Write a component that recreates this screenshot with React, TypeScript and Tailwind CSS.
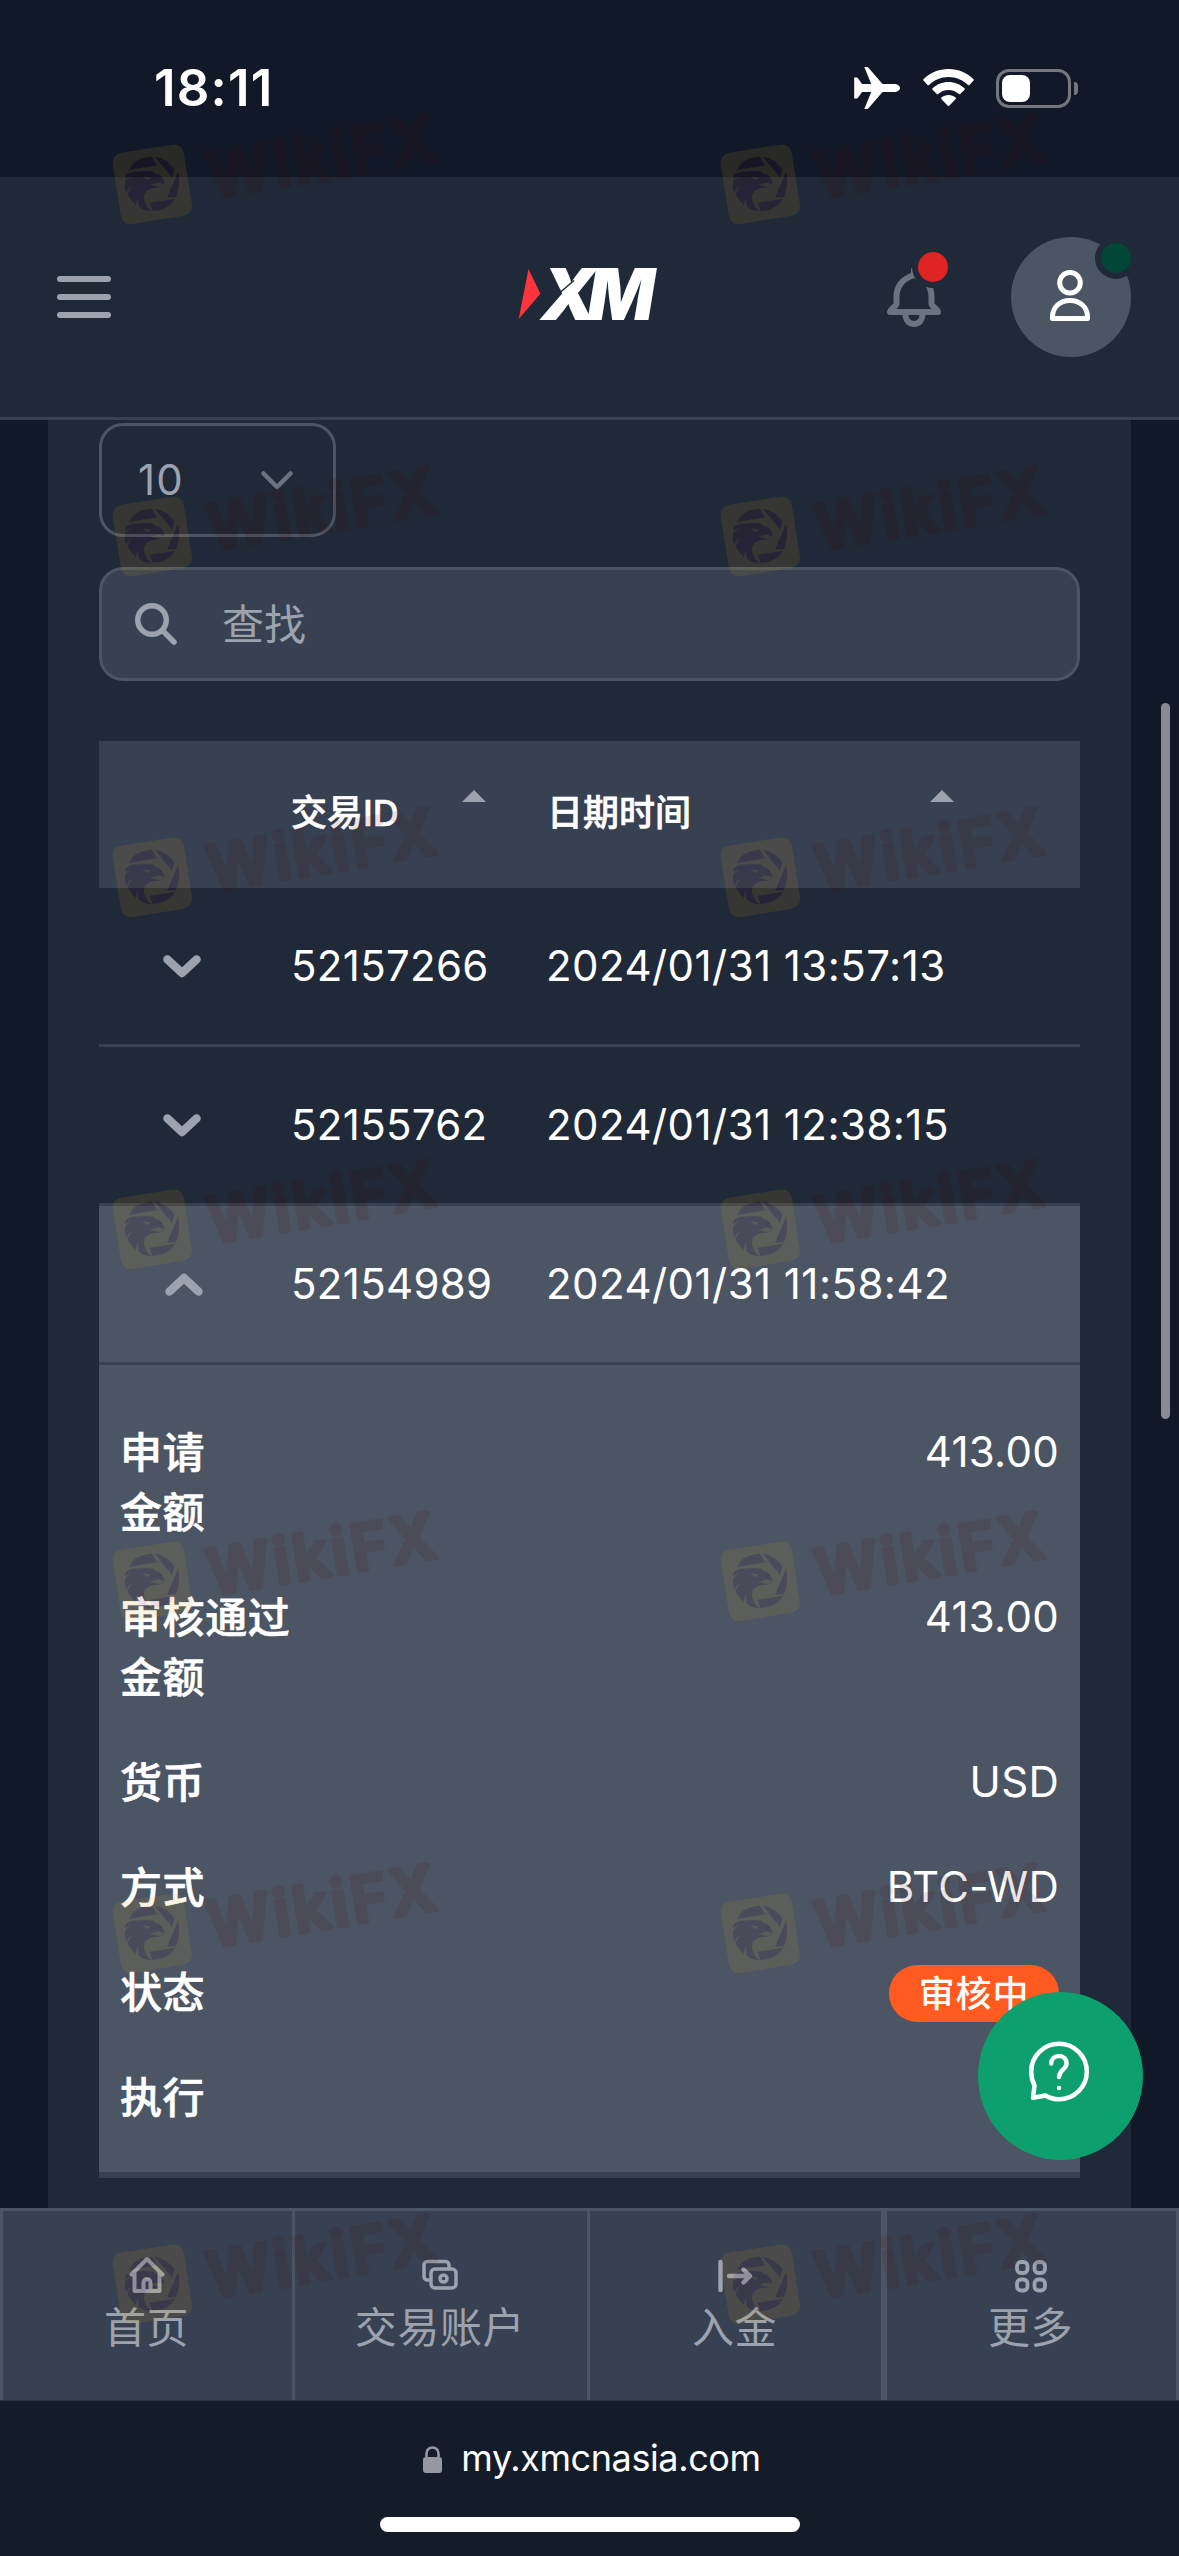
import React from "react";

const transactions = [
  { id: "52157266", date: "2024/01/31 13:57:13" },
  { id: "52155762", date: "2024/01/31 12:38:15" },
  { id: "52154989", date: "2024/01/31 11:58:42", open: true },
];

const watermarkRows = [144, 496, 837, 1189, 1541, 1893, 2244];

const StatusBar = () => (
  <div className="flex h-[177px] items-start justify-between pt-[58px] pr-[101px] pl-[154px]">
    <p className="text-[51px] leading-[60px] font-semibold tracking-[1.2px] text-white">18:11</p>
    <div className="flex h-[60px] items-center">
      <svg width="46" height="42" viewBox="0 0 46 42" fill="#fff">
        <path d="M40 17H28.5L14.5 .8C14 .3 13.5 0 12.8 0H10.3L17.2 17H8L4.2 11.6C3.8 11 3.2 10.6 2.5 10.6H.2V31.4H2.5C3.2 31.4 3.8 31 4.2 30.4L8 25H17.2L10.3 42H12.8C13.5 42 14 41.7 14.5 41.2L28.5 25H40C43.5 25 46 23 46 21S43.5 17 40 17Z" />
      </svg>
      <svg className="ml-[23px]" width="51" height="38" viewBox="0 0 51 38" fill="#fff">
        <path d="M25.500 0C15.600 0 6.600 3.900 .4 10.200C0 10.600 0 11.200 .4 11.600L4.600 15.900C5 16.300 5.600 16.300 6 15.900C11 10.900 17.900 7.900 25.500 7.900S40 10.900 45 15.900C45.400 16.300 46 16.300 46.400 15.900L50.600 11.600C51 11.200 51 10.600 50.600 10.200C44.400 3.900 35.400 0 25.500 0Z" />
        <path d="M25.500 13C19.300 13 13.700 15.400 9.500 19.300C9.100 19.700 9.100 20.300 9.500 20.700L13.800 25.100C14.200 25.500 14.700 25.500 15.100 25.100C17.900 22.600 21.500 21 25.500 21S33.100 22.600 35.900 25.100C36.300 25.500 36.800 25.500 37.200 25.100L41.500 20.700C41.900 20.300 41.900 19.700 41.500 19.300C37.300 15.400 31.700 13 25.500 13Z" />
        <path d="M25.500 26C22.800 26 20.300 27 18.400 28.600C18 29 18 29.500 18.300 29.900L24.800 36.700C25.200 37.100 25.800 37.100 26.200 36.700L32.700 29.900C33 29.500 33 29 32.600 28.600C30.700 27 28.200 26 25.500 26Z" />
      </svg>
      <div className="ml-[22px] h-[39px] w-[75px] rounded-[13px] border-3 border-[#75777f] p-[3px]">
        <div className="h-[27px] w-[28px] rounded-[8px] bg-white" />
      </div>
      <div className="ml-[3px] h-[13px] w-[4px] rounded-r-full bg-[#75777f]" />
    </div>
  </div>
);

const Logo = () => (
  <svg className="overflow-visible" width="142" height="90" viewBox="0 -19 142 90">
    <polygon points="12.500,0 24.400,24.700 2.600,50.300" fill="#ff343d" />
    <text
      x="25"
      y="50.500"
      fontSize="71"
      fontWeight="900"
      fontStyle="italic"
      letterSpacing="-9"
      textLength="105"
      lengthAdjust="spacingAndGlyphs"
      fill="#fff"
      className="font-['Inter']"
    >
      XM
    </text>
    <path d="M44 23.500L58 11.500" stroke="#1f2937" strokeWidth="1.500" />
  </svg>
);

const Header = () => (
  <div className="flex h-[243px] items-center justify-between border-b-3 border-[#374151] bg-[#1f2937] pr-12 pl-[57px]">
    <div className="flex w-[244px] flex-col gap-3">
      <div className="h-1.5 w-[54px] rounded-full bg-[#9ca3af]" />
      <div className="h-1.5 w-[54px] rounded-full bg-[#9ca3af]" />
      <div className="h-1.5 w-[54px] rounded-full bg-[#9ca3af]" />
    </div>
    <div className="ml-[215px] h-[94px]">
      <Logo />
    </div>
    <div className="ml-auto flex items-center gap-[63px]">
      <svg width="62" height="90" viewBox="886 252 62 90" fill="none">
        <g stroke="#6b7280" strokeWidth="6" strokeLinecap="round" strokeLinejoin="round">
          <path d="M914 270V275C902 279 896.500 287 896.500 297V304C896.500 306 890 309.500 890 312H938C938 309.500 931.500 306 931.500 304V297C931.500 287 926 279 914 275" />
          <path d="M905.500 314C905.500 320 909 324 914 324S922.500 320 922.500 314" />
        </g>
        <circle cx="933" cy="267" r="21" fill="#1f2937" />
        <circle cx="933" cy="267" r="15" fill="#e02424" />
      </svg>
      <div className="relative flex h-[120px] w-[120px] rounded-full bg-[#4b5563]">
        <svg width="120" height="120" viewBox="1011 237 120 120" fill="none" stroke="#fff" strokeWidth="5" strokeLinejoin="round">
          <circle cx="1070" cy="282.700" r="10.300" />
          <path d="M1052.500 318.500V317C1052.500 307 1060 300.500 1070 300.500S1087.500 307 1087.500 317V318.500Z" />
        </svg>
        <div className="absolute top-0 -right-1.5 h-[42px] w-[42px] rounded-full border-6 border-[#1f2937] bg-[#014737]" />
      </div>
    </div>
  </div>
);

const Chevron = ({ up = false }) => (
  <svg
    className={up ? "ml-[66px] rotate-180" : "ml-[64px]"}
    width="38"
    height="23"
    viewBox="0 0 38 23"
    fill="none"
    stroke="#9ca3af"
    strokeWidth="8.500"
    strokeLinecap="round"
    strokeLinejoin="round"
  >
    <path d="M4.500 4.500L19 18L33.500 4.500" />
  </svg>
);

const SortArrow = () => (
  <svg className="-mt-[34px]" width="24" height="12" viewBox="0 0 24 12">
    <polygon points="12,0 24,12 0,12" fill="#9ca3af" />
  </svg>
);

const Table = () => (
  <div className="mt-[60px]">
    <div className="grid h-[147px] grid-cols-[192px_256px_1fr] items-center bg-[#374151] pb-1 text-[36px] font-medium text-white [-webkit-text-stroke:0.6px]">
      <div />
      <div className="flex items-center justify-between pr-[61px]">
        <span>交易ID</span>
        <SortArrow />
      </div>
      <div className="flex items-center justify-between pr-[126px]">
        <span>日期时间</span>
        <SortArrow />
      </div>
    </div>
    {transactions.map((item) => (
      <div
        key={item.id}
        className={
          item.open
            ? "grid h-[159px] grid-cols-[192px_255px_1fr] items-center border-b-3 border-[#374151] bg-[#4b5563] text-[42px] text-white"
            : "grid h-[159px] grid-cols-[192px_255px_1fr] items-center border-b-3 border-[#374151] text-[42px] text-white"
        }
      >
        <Chevron up={item.open} />
        <span className="pb-0.5 tracking-[0.3px]">{item.id}</span>
        <span className="pb-0.5 tracking-[0.45px]">{item.date}</span>
      </div>
    ))}
    <Details />
  </div>
);

const DetailRow = ({ label, children }: { label: React.ReactNode; children?: React.ReactNode }) => (
  <div className="flex justify-between">
    <p className="font-medium tracking-[0.6px] [-webkit-text-stroke:0.6px]">{label}</p>
    <div className="-mt-px tracking-[0.3px]">{children}</div>
  </div>
);

const Details = () => (
  <div className="flex h-[813px] flex-col gap-[45px] border-b-6 border-[#374151] bg-[#4b5563] px-[21px] pt-[58px] text-[42px] leading-[60px] text-white">
    <DetailRow
      label={
        <>
          申请
          <br />
          金额
        </>
      }
    >
      413.00
    </DetailRow>
    <DetailRow
      label={
        <>
          审核通过
          <br />
          金额
        </>
      }
    >
      413.00
    </DetailRow>
    <DetailRow label="货币">USD</DetailRow>
    <DetailRow label="方式">BTC-WD</DetailRow>
    <DetailRow label="状态">
      <span className="mt-[3px] flex h-[57px] w-[170px] items-center justify-center rounded-full bg-[#ff5a1f] text-[36px] font-medium tracking-[0.9px]">
        审核中
      </span>
    </DetailRow>
    <DetailRow label="执行" />
  </div>
);

const HelpButton = () => (
  <div className="absolute top-[1992px] left-[978px] flex h-[168px] w-[165px] rounded-[50%] bg-[#0e9f6e]">
    <svg width="165" height="168" viewBox="978 1992 165 168" fill="none" stroke="#fff" strokeWidth="4.500" strokeLinecap="round" strokeLinejoin="round">
      <path d="M1034.500 2085.500C1032.300 2081.200 1031.200 2076.500 1031.200 2071.500C1031.200 2056 1043.700 2043.700 1059 2043.700S1086.800 2056 1086.800 2071.500S1074.300 2099.300 1059 2099.300C1054 2099.300 1049.400 2098 1045.400 2095.500L1033 2097.800Z" />
      <path d="M1051.200 2063.500C1051.200 2059 1054.500 2056 1059 2056S1066.500 2059.200 1066.500 2063.500C1066.500 2069.500 1059 2070 1059 2077" />
      <path d="M1059 2088V2088.100" />
    </svg>
  </div>
);

const NavBar = () => (
  <div className="flex h-[193px] border-t-3 border-b border-[#4b5563] border-b-[#2f353f] bg-[#374151] text-[42px] leading-[60px] tracking-[0.6px] text-[#9ca3af]">
    <div className="flex w-[295px] flex-col items-center border-x-3 border-[#4b5563] pt-[45px] pr-0.5">
      <svg width="36" height="37" viewBox="0 0 36 37" fill="none" stroke="currentColor" strokeWidth="4" strokeLinecap="round" strokeLinejoin="round">
        <path d="M2.500 18.500L18 3L33.500 18.500M5.500 16V35H30.500V16" />
        <path d="M14.500 35V26.500C14.500 22 21.500 22 21.500 26.500V35" />
      </svg>
      <p className="mt-[5px]">首页</p>
    </div>
    <div className="flex w-[295px] flex-col items-center border-r-3 border-[#4b5563] pt-[45px] pr-0.5">
      <svg width="36" height="37" viewBox="0 0 36 37" fill="none" stroke="currentColor" strokeWidth="3.500" strokeLinecap="round" strokeLinejoin="round">
        <path d="M7 24H5.500C3.500 24 2 22.500 2 20.500V9C2 7 3.500 5.500 5.500 5.500H23.500C25.500 5.500 27 7 27 9V12" />
        <rect x="9" y="13" width="25" height="19" rx="4" />
        <circle cx="21.500" cy="22.500" r="3.500" />
      </svg>
      <p className="mt-[5px]">交易账户</p>
    </div>
    <div className="flex w-[294px] flex-col items-center border-r-3 border-[#4b5563] pt-[45px] pr-0.5">
      <svg width="36" height="37" viewBox="0 0 36 37" fill="none" stroke="currentColor" strokeWidth="4.400" strokeLinecap="round" strokeLinejoin="round">
        <path d="M3.500 6V34M12 20H33M26.500 13.500L33 20L26.500 26.500" />
      </svg>
      <p className="mt-[5px]">入金</p>
    </div>
    <div className="flex w-[295px] flex-col items-center border-x-3 border-[#4b5563] pt-[45px] pr-0.5">
      <svg width="36" height="37" viewBox="0 0 36 37" fill="none" stroke="currentColor" strokeWidth="3.800">
        <rect x="4" y="6" width="10.500" height="11" rx="4" />
        <rect x="21.500" y="6" width="10.500" height="11" rx="4" />
        <rect x="4" y="23.500" width="10.500" height="11" rx="4" />
        <rect x="21.500" y="23.500" width="10.500" height="11" rx="4" />
      </svg>
      <p className="mt-[5px]">更多</p>
    </div>
  </div>
);

const AddressBar = () => (
  <div className="flex h-[155px] flex-col items-center bg-[#141b29] pt-[34px]">
    <div className="flex h-[46px] items-center gap-[19px] pl-[5px]">
      <svg className="mt-0.5" width="19" height="27" viewBox="0 0 19 27">
        <path d="M3.500 13V7.500C3.500 -.5 15.500 -.5 15.500 7.500V13" fill="none" stroke="#9698a3" strokeWidth="2.600" />
        <rect y="11" width="19" height="16" rx="3" fill="#9698a3" />
      </svg>
      <p className="text-[36px] leading-[46px] tracking-[-0.4px] text-white">my.xmcnasia.com</p>
    </div>
    <div className="mt-9 h-[15px] w-[420px] rounded-full bg-white" />
  </div>
);

const Watermark = () => (
  <svg className="overflow-visible" width="330" height="81" viewBox="0 0 990 243">
    <g opacity="0.12">
      <rect x="13" y="13" width="216" height="216" rx="30" transform="rotate(-9 121 121)" fill="#d8a018" />
      <g fill="#500028">
        <path d="M50 78L66 56Q90 38 120 38L135 64Z" />
        <path d="M128 38Q162 42 188 76L180 101Z" />
        <path d="M198 84Q208 120 192 159L165 161Z" />
        <path d="M112 176L190 164Q170 198 122 201Z" />
        <path d="M43 91C65 80 100 80 125 83L130 90C145 92 157 104 157 120L145 117C130 115 125 121 115 123L143 128L141 132C120 128 95 140 96 160C97 180 108 192 118 202C100 200 88 195 80 188L77 160L72 183C60 172 50 160 46 148L62 122L42 144C36 130 37 115 42 108L60 98L38 104Z" />
      </g>
      <path d="M93 98L118 101L105 108Z" fill="#d8a018" />
    </g>
    <text
      x="298"
      y="164"
      transform="rotate(-9.500 298 164)"
      fontSize="192"
      fontWeight="600"
      letterSpacing="10"
      textLength="700"
      lengthAdjust="spacingAndGlyphs"
      fill="#500000"
      stroke="#500000"
      strokeWidth="13"
      strokeLinejoin="round"
      opacity="0.1"
      className="font-['Inter']"
    >
      WikiFX
    </text>
  </svg>
);

const App = () => {
  return (
    <div className="relative flex h-[2556px] w-[1179px] flex-col overflow-hidden bg-[#111827] font-['Inter','Noto_Sans_CJK_SC',sans-serif]">
      <StatusBar />
      <Header />

      {/* CONTENT */}
      <div className="mx-12 h-[1788px] bg-[#1f2937] px-[51px] pt-[3px]">
        <div className="flex h-[114px] w-[237px] items-center justify-between rounded-3xl border-3 border-[#4b5563] pr-10 pl-[36px] text-[42px] text-[#9ca3af]">
          <span className="pb-0.5 tracking-[1.2px]">10</span>
          <svg width="32" height="19" viewBox="0 0 32 19" fill="none" stroke="#6b7280" strokeWidth="4.500" strokeLinecap="round" strokeLinejoin="round">
            <path d="M2.500 2.500L16 16L29.500 2.500" />
          </svg>
        </div>
        <div className="mt-[30px] flex h-[114px] items-center rounded-3xl border-3 border-[#4b5563] bg-[#374151] pl-[33px] text-[42px] text-[#9ca3af]">
          <svg width="42" height="42" viewBox="0 0 42 42" fill="none" stroke="currentColor" strokeWidth="5.500" strokeLinecap="round">
            <circle cx="17" cy="17" r="14.250" />
            <path d="M28 28L39 39" />
          </svg>
          <span className="ml-[45px]">查找</span>
        </div>
        <Table />
      </div>

      <NavBar />
      <AddressBar />

      {/* OVERLAYS */}
      <div className="absolute top-[703px] left-[1161px] h-[716px] w-[9px] rounded-full bg-[#888b93]" />
      <HelpButton />
      {watermarkRows.map((top) => (
        <div key={top} className="pointer-events-none absolute left-[112px] flex gap-[278px]" style={{ top }}>
          <Watermark />
          <Watermark />
        </div>
      ))}
    </div>
  );
};

export default App;
